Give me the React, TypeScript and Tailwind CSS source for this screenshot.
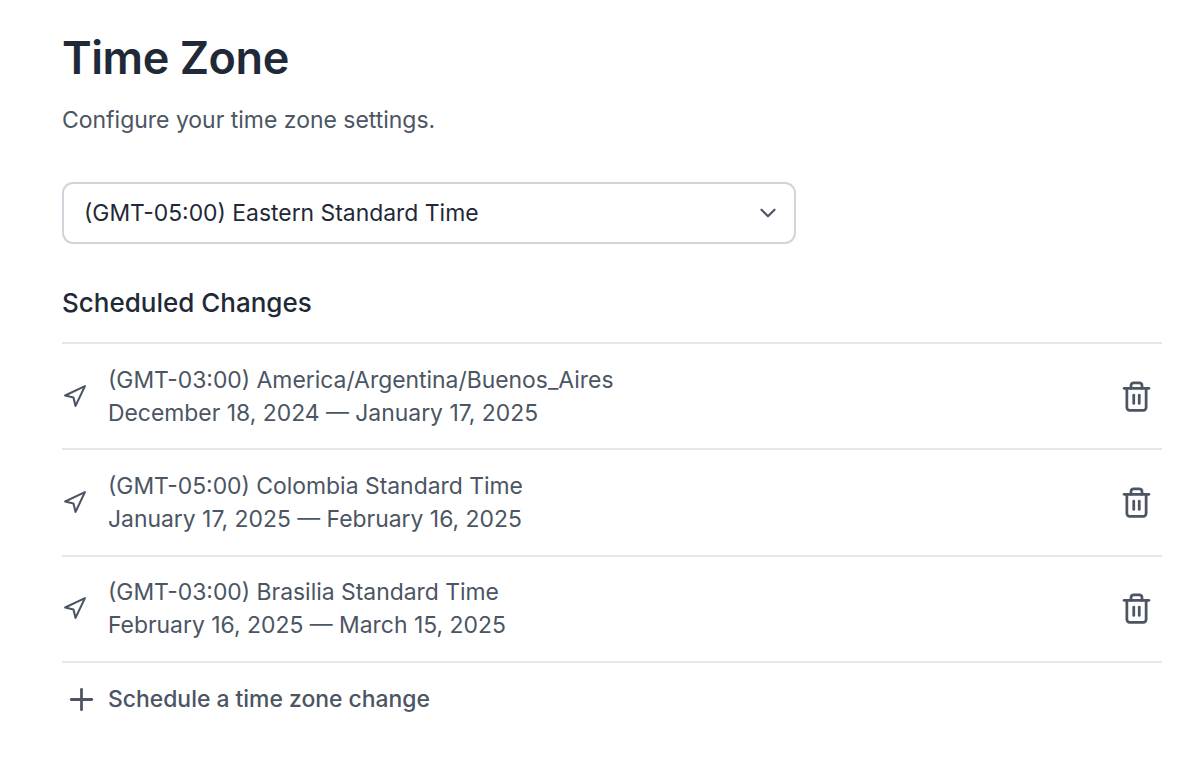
import { Navigation, Trash2, ChevronDown, Plus } from "lucide-react";

const rows = [
  ["(GMT-03:00) America/Argentina/Buenos_Aires", "December 18, 2024 — January 17, 2025"],
  ["(GMT-05:00) Colombia Standard Time", "January 17, 2025 — February 16, 2025"],
  ["(GMT-03:00) Brasilia Standard Time", "February 16, 2025 — March 15, 2025"],
];

export default function App() {
  return (
    <div className="min-h-[761px] bg-white pl-[62px] pr-[38px] pt-[31px] font-['Inter',sans-serif]">
      <h1 className="text-[45px] leading-[54px] font-semibold text-[#1f2937] tracking-[-0.45px]">Time Zone</h1>
      <p className="mt-[17px] text-[22.96px] leading-[36px] text-[#4b5563]">Configure your time zone settings.</p>
      <div className="mt-[44px] flex h-[62px] w-[734px] items-center justify-between rounded-[11px] border-2 border-[#d1d5db] pl-[20px] pr-[13px] text-[22.9px] text-[#1f2937]">
        <span>(GMT-05:00) Eastern Standard Time</span>
        <ChevronDown className="h-[26px] w-[26px] text-[#4b5563]" strokeWidth={2} />
      </div>
      <h2 className="mt-[41px] text-[26px] leading-[36px] font-[450] text-[#1f2937]">Scheduled Changes</h2>
      <div className="mt-[21px] border-t-2 border-[#e5e7eb]">
        {rows.map(([a, b]) => (
          <div key={a} className="flex h-[106.4px] items-center justify-between border-b-2 border-[#e5e7eb] text-[#4b5563]">
            <div className="flex items-center gap-[21px]">
              <Navigation className="h-[25px] w-[25px] text-[#4b5563]" strokeWidth={2} />
              <div className="pt-[1px] text-[22.9px] leading-[33px]">
                <div>{a}</div>
                <div>{b}</div>
              </div>
            </div>
            <Trash2 className="mr-[9px] h-[33px] w-[33px] text-[#4b5563]" strokeWidth={2} />
          </div>
        ))}
      </div>
      <div className="flex h-[72px] items-center gap-[21px] text-[22.9px] font-medium text-[#4b5563]">
        <Plus className="ml-[2px] -mr-[12px] h-[35px] w-[35px]" strokeWidth={1.9} />
        <span>Schedule a time zone change</span>
      </div>
    </div>
  );
}
